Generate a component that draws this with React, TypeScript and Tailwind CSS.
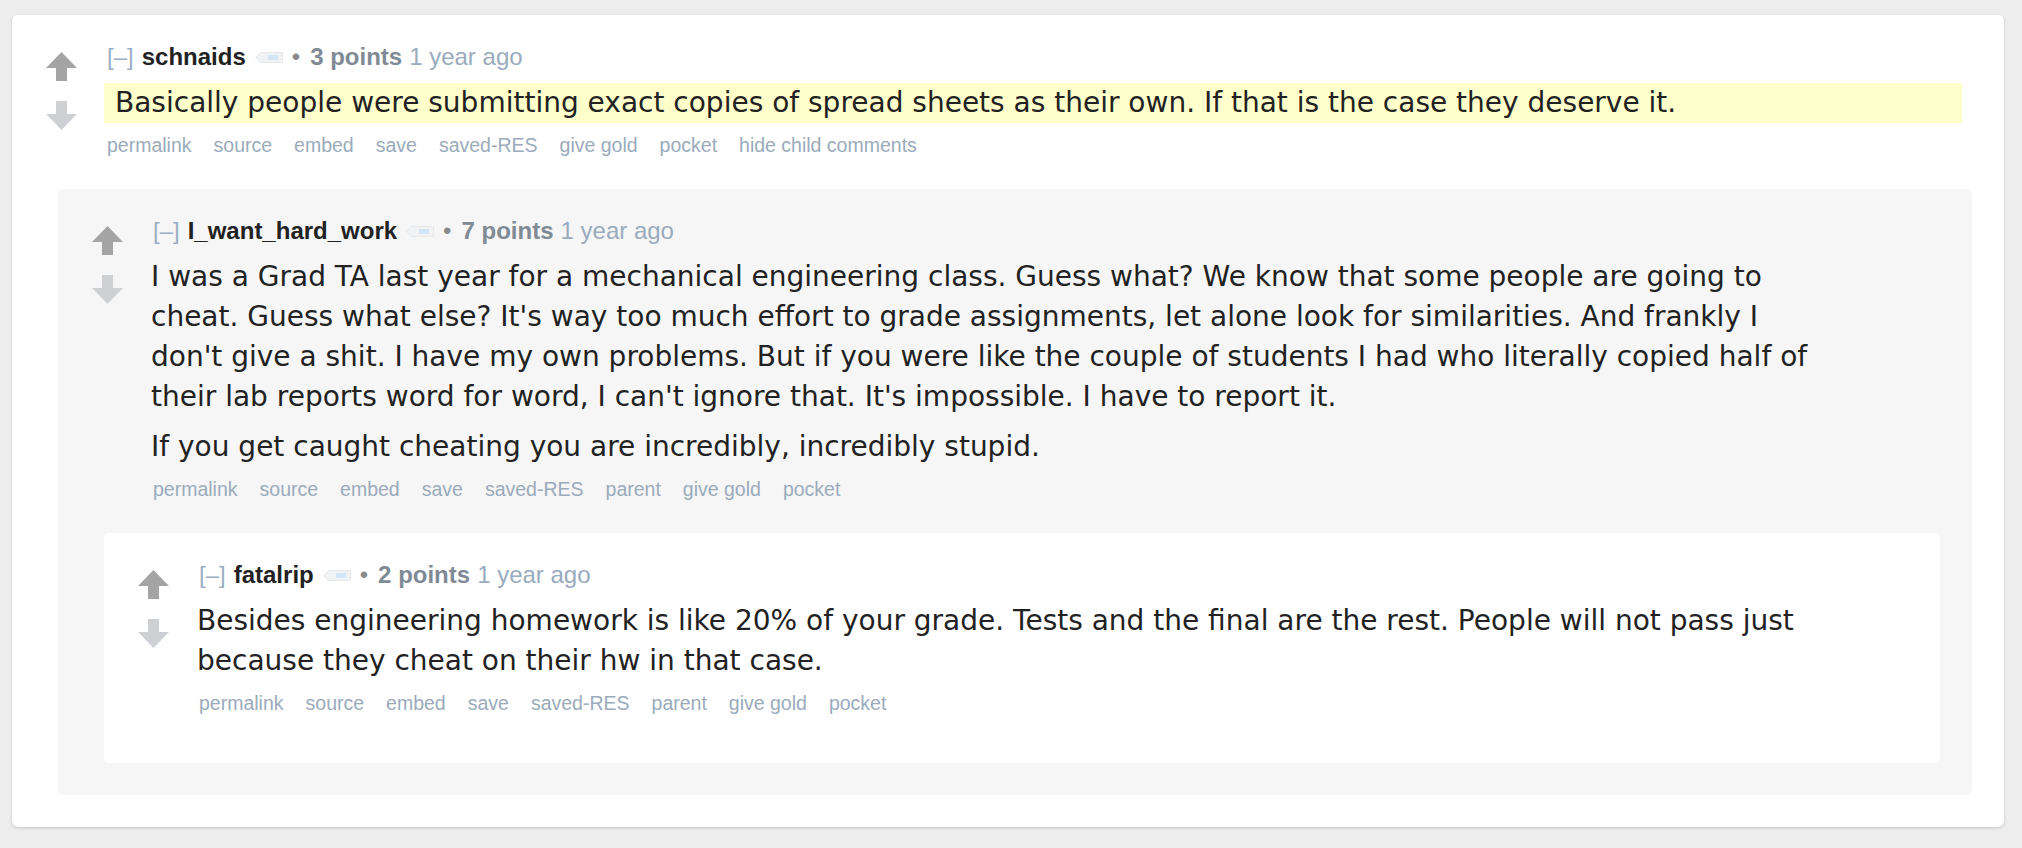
import React from 'react'

type CommentData = {
  author: string
  points: string
  age: string
  paragraphs: string[]
  links: string[]
  highlight?: boolean
  bodyWidth?: string
  box?: string
  children?: CommentData[]
}

const thread: CommentData = {
  author: 'schnaids',
  points: '3 points',
  age: '1 year ago',
  highlight: true,
  paragraphs: [
    'Basically people were submitting exact copies of spread sheets as their own. If that is the case they deserve it.',
  ],
  links: ['permalink', 'source', 'embed', 'save', 'saved-RES', 'give gold', 'pocket', 'hide child comments'],
  children: [
    {
      author: 'I_want_hard_work',
      points: '7 points',
      age: '1 year ago',
      bodyWidth: 'max-w-[1680px]',
      box: 'bg-[#f6f6f6]',
      paragraphs: [
        "I was a Grad TA last year for a mechanical engineering class. Guess what? We know that some people are going to cheat. Guess what else? It's way too much effort to grade assignments, let alone look for similarities. And frankly I don't give a shit. I have my own problems. But if you were like the couple of students I had who literally copied half of their lab reports word for word, I can't ignore that. It's impossible. I have to report it.",
        'If you get caught cheating you are incredibly, incredibly stupid.',
      ],
      links: ['permalink', 'source', 'embed', 'save', 'saved-RES', 'parent', 'give gold', 'pocket'],
      children: [
        {
          author: 'fatalrip',
          points: '2 points',
          age: '1 year ago',
          bodyWidth: 'max-w-[1640px]',
          box: 'bg-white',
          paragraphs: [
            'Besides engineering homework is like 20% of your grade. Tests and the final are the rest. People will not pass just because they cheat on their hw in that case.',
          ],
          links: ['permalink', 'source', 'embed', 'save', 'saved-RES', 'parent', 'give gold', 'pocket'],
        },
      ],
    },
  ],
}

const Arrow = ({ down, color }: { down?: boolean; color: string }) => (
  <svg width="31" height="29" viewBox="0 0 31 29" className="block">
    <polygon
      points={down ? '15.5,29 31,13 21,13 21,0 10,0 10,13 0,13' : '15.5,0 31,16 21,16 21,29 10,29 10,16 0,16'}
      fill={color}
    />
  </svg>
)

// RES user tag
const TagIcon = () => (
  <svg width="28" height="11" viewBox="0 0 28 11" className="ml-[9px] block">
    <path d="M6 0.5 H27 A0.5 0.5 0 0 1 27.5 1 V10 A0.5 0.5 0 0 1 27 10.5 H6 L0.5 5.5 Z" fill="#f1f2f4" stroke="#e6e8eb" />
    <rect x="13" y="3" width="10" height="5" fill="#d3e6f8" />
  </svg>
)

const Comment = ({ c }: { c: CommentData }) => (
  <div className={`rounded-[5px] pt-[27px] pb-[32px] pr-[32px] ${c.box ?? ''}`}>
    <div className="flex items-start">
      <div className="ml-[34px] mt-[10px] flex w-[31px] shrink-0 flex-col gap-[20px]">
        <Arrow color="#a4a4a4" />
        <Arrow down color="#cfd0d4" />
      </div>
      <div className="ml-[27px] mr-[10px] mb-[14px] min-w-0 flex-1">
        <div className="flex h-[30px] items-center pl-[3px] font-['Liberation_Sans',Arial,sans-serif] text-[24px] text-[#9aafc3]">
          <span>[–]</span>
          <span className="ml-[8px] font-bold text-[#222]">{c.author}</span>
          <TagIcon />
          <span className="ml-[9px] text-[#8a8a8a]">•</span>
          <span className="ml-[10px] font-bold text-[#7f8a95]">{c.points}</span>
          <span className="ml-[7px] text-[#9aabbd]">{c.age}</span>
        </div>
        <div
          className={`mt-[11px] font-['DejaVu_Sans',Verdana,sans-serif] text-[28px] leading-[40px] text-[#222] ${
            c.highlight ? 'bg-[#ffffcc] px-[11px]' : 'pl-[1px]'
          }`}
        >
          {c.paragraphs.map((p, i) => (
            <p key={i} className={`${c.bodyWidth ?? ''} ${i > 0 ? 'mt-[10px]' : ''}`}>
              {p}
            </p>
          ))}
        </div>
        <div className="mt-[10px] flex h-[26px] items-center gap-[22px] pl-[3px] font-['Liberation_Sans',Arial,sans-serif] text-[19.5px] text-[#9aabbc]">
          {c.links.map((l) => (
            <span key={l}>{l}</span>
          ))}
        </div>
      </div>
    </div>
    {c.children && (
      <div className="ml-[46px] mt-[16px]">
        {c.children.map((ch, i) => (
          <Comment key={i} c={ch} />
        ))}
      </div>
    )}
  </div>
)

export default function App() {
  return (
    <div className="min-h-screen bg-[#ededed] pt-[15px] pb-[21px] pl-[12px] pr-[18px]">
      <div className="rounded-[6px] bg-white shadow-[0_1px_3px_rgba(0,0,0,0.18)]">
        <Comment c={thread} />
      </div>
    </div>
  )
}
